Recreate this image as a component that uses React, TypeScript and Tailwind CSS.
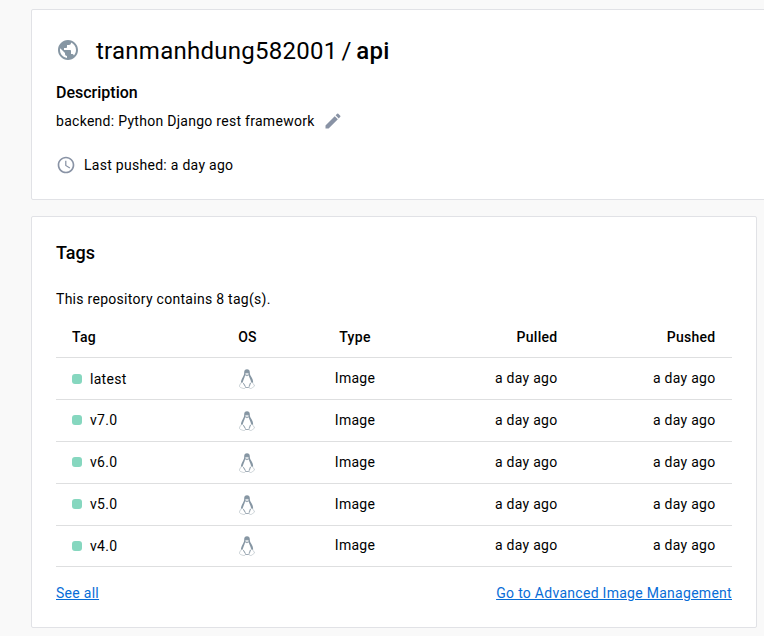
import React from "react";
import { MdPublic, MdEdit, MdSchedule } from "react-icons/md";

const tags = [
  { name: "latest", row: "h-[42px]", label: "pt-[2px]", icon: "pt-[2px]", value: "" },
  { name: "v7.0", row: "h-[42px]", label: "", icon: "pt-[2px]", value: "" },
  { name: "v6.0", row: "h-[42px]", label: "", icon: "pt-[2px]", value: "" },
  { name: "v5.0", row: "h-[42px]", label: "", icon: "pt-[2px]", value: "" },
  { name: "v4.0", row: "h-[41px]", label: "", icon: "", value: "pb-[2px]" },
];

function Tux() {
  return (
    <svg width="16" height="20" viewBox="0 0 16 20" fill="none">
      <path d="M5.200 3.300C5.200 1.300 6.200.2 8 .2s2.800 1.100 2.800 3.100c0 1.700.4 2.800 1.300 4.200 1.300 2.100 2.200 4 2 6.500H1.900c0-2.700 1.100-4.200 2-6 .9-1.600 1.400-2.800 1.300-4.700z" fill="#8696a3" />
      <path d="M6.100 6.200 8 7.300l1.700-1.100c.3 2 2.100 4.300 2.400 7l-1 4.800-1.600.6h-3L3.700 14.300c0-3.300 2-5 2.400-8.100z" fill="#fff" />
      <path d="M6.100 4.500 8 3.700l1.800.8-.2 1L8 6.400l-1.600-.9z" fill="#dce1e5" />
      <path d="M3.200 13.200 1.400 14.700.4 17c.2 1.200 1 1.500 2 1.800 1 .4 2.400 1 3.400.6.9-.5.8-1.500.3-2.300L4.300 14zM12.800 13.200l1.600 1.500 1.200 2.300-2.200 1.700c-1 .9-2.400 1.200-3.100.3-.6-1.200.1-3 .8-4.700z" fill="#fff" stroke="#bcc5cb" strokeWidth=".75" />
      <path d="m4.400 14.200 2 3.400M11.500 14l-1.200 3.500M6.500 18.500h3.300" stroke="#8696a3" strokeWidth=".8" />
    </svg>
  );
}

export default function App() {
  return (
    <div className="h-[636px] w-[764px] overflow-hidden bg-[#f9f9f9] pl-[31px] pt-[9px] font-['Roboto',sans-serif] text-sm tracking-[0.28px] text-black">
      <section className="h-[191px] w-[760px] rounded-[2px] border border-[#e1e2e6] bg-white pl-6 pt-6">
        <div className="flex h-8 items-center">
          <MdPublic className="mr-4 size-6 text-[#8696a3]" />
          <h1 className="flex pt-[2px] text-2xl tracking-[0.26px]"><span>tranmanhdung582001</span><span className="ml-1">/</span><b className="ml-[4.5px] font-medium">api</b></h1>
        </div>
        <h2 className="mt-[15px] text-base leading-6 font-medium tracking-normal">Description</h2>
        <div className="mt-[6px] flex h-5 items-center">backend: Python Django rest framework<MdEdit className="ml-2 size-5 text-[#8993a5]" /></div>
        <div className="mt-6 flex h-5 items-center"><MdSchedule className="mr-2 size-5 text-[#8993a5]" />Last pushed: a day ago</div>
      </section>
      <section className="mt-4 h-[412px] w-[726px] rounded-[2px] border border-[#e1e2e6] bg-white px-6 pt-6">
        <h2 className="text-lg leading-6 font-medium tracking-normal">Tags</h2>
        <p className="mt-6 leading-5">This repository contains 8 tag(s).</p>
        <table className="mt-[7px] w-[676px] table-fixed border-collapse">
          <colgroup><col className="w-[147px]" /><col className="w-[88px]" /><col className="w-[127px]" /><col className="w-[156px]" /><col className="w-[158px]" /></colgroup>
          <thead>
            <tr className="h-[41px] border-b border-[#dedfe0]">
              <th className="pl-4 pt-[2px] text-left font-medium">Tag</th><th className="pt-[2px] pl-px font-medium">OS</th><th className="pt-[2px] pl-px font-medium">Type</th><th className="pr-[16.5px] pt-[2px] text-right font-medium">Pulled</th><th className="pr-[16.5px] pt-[2px] text-right font-medium">Pushed</th>
            </tr>
          </thead>
          <tbody>
            {tags.map((tag) => (
              <tr key={tag.name} className={`${tag.row} border-b border-[#dedfe0]`}>
                <td className={`pl-4 ${tag.label}`}><div className="flex items-center gap-2"><span className="size-[10px] rounded-[3px] bg-[#86d7bf]" />{tag.name}</div></td>
                <td className={tag.icon}><div className="flex justify-center"><Tux /></div></td>
                <td className={`pl-px text-center ${tag.value}`}>Image</td>
                <td className={`pr-[16.5px] text-right ${tag.value}`}>a day ago</td>
                <td className={`pr-[16.5px] text-right ${tag.value}`}>a day ago</td>
              </tr>
            ))}
          </tbody>
        </table>
        <div className="mt-4 flex justify-between leading-5 text-[#086dd7] underline"><a>See all</a><a>Go to Advanced Image Management</a></div>
      </section>
    </div>
  );
}
